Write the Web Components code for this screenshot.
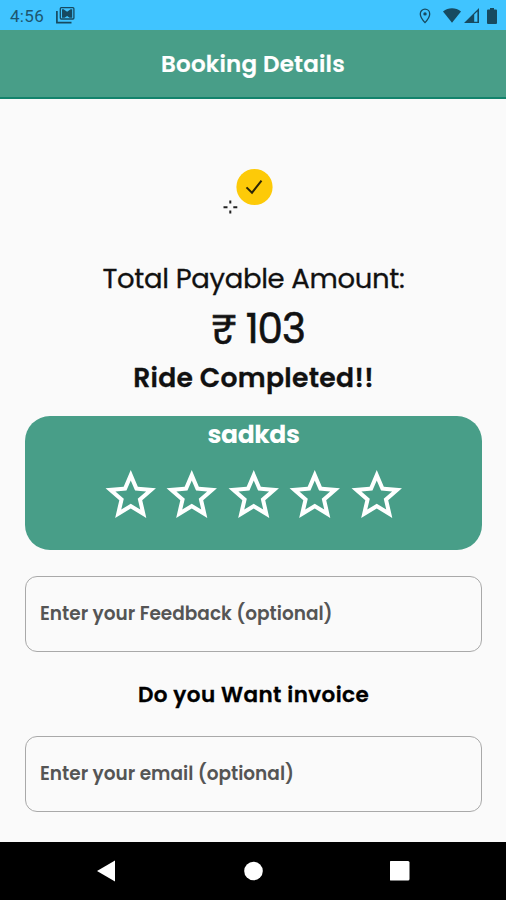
<!DOCTYPE html>
<html lang="en">
<head>
<meta charset="utf-8">
<meta name="viewport" content="width=device-width, initial-scale=1">
<title>Booking Details</title>
<style>
  body {
    margin: 0;
    font-family: Poppins, Inter, "Noto Sans", sans-serif;
    color: #111;
    background: #fafafa;
  }
</style>
</head>
<body>
<booking-screen>
  <status-bar slot="top" time="4:56"></status-bar>
  <app-header slot="top">Booking Details</app-header>

  <success-mark></success-mark>
  <text-row class="label">Total Payable Amount:</text-row>
  <text-row class="amount">₹ 103</text-row>
  <text-row class="state">Ride Completed!!</text-row>
  <rating-card>sadkds</rating-card>
  <outlined-field>Enter your Feedback (optional)</outlined-field>
  <text-row class="question">Do you Want invoice</text-row>
  <outlined-field>Enter your email (optional)</outlined-field>

  <nav-bar slot="bottom"></nav-bar>
</booking-screen>

<script>
// Attach an open shadow root filled with the given markup
function render(el, html) {
  const template = document.createElement('template');
  template.innerHTML = html;
  el.attachShadow({ mode: 'open' }).appendChild(template.content.cloneNode(true));
}

class BookingScreen extends HTMLElement {
  constructor() {
    super();
    render(this, `
      <style>
        :host {
          display: flex;
          flex-direction: column;
          height: 900px;
          overflow: hidden;
        }
        main {
          flex: 1;
          display: flex;
          flex-direction: column;
          padding: 0 24px 0 25px;
        }
        ::slotted(rating-card) { margin: 12px 0 26px; }
      </style>
      <slot name="top"></slot>
      <main><slot></slot></main>
      <slot name="bottom"></slot>
    `);
  }
}

class StatusBar extends HTMLElement {
  constructor() {
    super();
    render(this, `
      <style>
        :host {
          display: flex;
          align-items: center;
          box-sizing: border-box;
          height: 30px;
          padding: 1px 9px 0 10px;
          background: #40c4ff;
          color: #1d566f;
          font: 17px/30px Roboto, sans-serif;
        }
        .time { width: 46px; letter-spacing: 0.3px; }
        .space { flex: 1; }
        svg { display: block; fill: #174a60; }
        .mail { margin-bottom: 1px; }
        .pin { margin-right: 12px; }
        .wifi { margin-right: 3px; }
        .signal { margin-right: 8px; }
      </style>
      <span class="time"></span>
      <svg class="mail" width="19" height="17" viewBox="0 0 19 17">
        <path d="M.9 4v11.600h14.600" fill="none" stroke="#174a60" stroke-width="1.700"/>
        <rect x="4.300" y=".7" width="13.600" height="11.300" rx="1" fill="none" stroke="#174a60" stroke-width="1.300"/>
        <path d="M6 2.300h1.600l3.500 2.500 3.500-2.500h1.600v8.500h-2.600L11.100 9 8.600 10.800H6z"/>
      </svg>
      <span class="space"></span>
      <svg class="pin" width="12" height="16" viewBox="0 0 12 16">
        <path d="M6 1.200a4.700 4.700 0 0 0-4.700 4.700C1.300 9.300 6 14.600 6 14.600s4.700-5.300 4.700-8.700A4.700 4.700 0 0 0 6 1.200z" fill="none" stroke="#174a60" stroke-width="1.300"/>
        <circle cx="6" cy="5.900" r="1.700"/>
      </svg>
      <svg class="wifi" width="18" height="15" viewBox="0 0 18 15">
        <path d="M0 3.500C5.400-.7 12.600-.7 18 3.500L9 14.700z"/>
      </svg>
      <svg class="signal" width="15" height="15" viewBox="0 0 15 15">
        <path fill-rule="evenodd" d="M0 15 15 0v15zM10.200 6.600v7.200h3.200V3.400z"/>
      </svg>
      <svg width="10" height="16" viewBox="0 0 10 16">
        <path d="M3 0h4v1.600h2a1 1 0 0 1 1 1V15a1 1 0 0 1-1 1H1a1 1 0 0 1-1-1V2.600a1 1 0 0 1 1-1h2z"/>
      </svg>
    `);
  }

  connectedCallback() {
    this.shadowRoot.querySelector('.time').textContent = this.getAttribute('time');
  }
}

class AppHeader extends HTMLElement {
  constructor() {
    super();
    render(this, `
      <style>
        :host {
          display: flex;
          align-items: center;
          justify-content: center;
          box-sizing: border-box;
          height: 69px;
          padding-top: 1px;
          background: #489e88;
          border-bottom: 2px solid #12836c;
          color: #fff;
          font-size: 23px;
          font-weight: 600;
          letter-spacing: 0.2px;
          -webkit-text-stroke: 0.2px;
        }
      </style>
      <slot></slot>
    `);
  }
}

class SuccessMark extends HTMLElement {
  constructor() {
    super();
    render(this, `
      <style>
        :host { display: flex; justify-content: center; height: 155px; }
        svg { display: block; }
      </style>
      <svg width="101" height="155" viewBox="203 99 101 155">
        <circle cx="254.500" cy="187" r="18.100" fill="#fdca08"/>
        <path d="M246.500 187.400l5.500 5.300 9.500-12" fill="none" stroke="#2b2507" stroke-width="2"/>
        <path d="M230.300 200.500v3M230.300 210.500v3M223.500 207.200h4M233.300 207.200h4" stroke="#222" stroke-width="2"/>
      </svg>
    `);
  }
}

class TextRow extends HTMLElement {
  constructor() {
    super();
    render(this, `
      <style>
        :host {
          display: flex;
          align-items: center;
          justify-content: center;
          white-space: nowrap;
          -webkit-text-stroke: 0.3px;
        }
        :host(.label) { height: 50px; font-size: 27.5px; letter-spacing: -0.33px; }
        :host(.amount) {
          box-sizing: border-box;
          height: 48px;
          padding: 1px 0 0 9px;
          font-size: 40.5px;
          letter-spacing: -1px;
          -webkit-text-stroke: 0.6px;
        }
        :host(.state) { height: 52px; font-size: 26.6px; font-weight: 600; letter-spacing: 0.3px; }
        :host(.question) { height: 84px; font-size: 21.5px; font-weight: 600; letter-spacing: 0.4px; color: #000; }
      </style>
      <slot></slot>
    `);
  }
}

class RatingCard extends HTMLElement {
  constructor() {
    super();
    render(this, `
      <style>
        :host {
          display: block;
          height: 134px;
          border-radius: 25px;
          background: #489e88;
          color: #fff;
        }
        .name {
          height: 49px;
          line-height: 38px;
          text-align: center;
          font-size: 25px;
          font-weight: 700;
          letter-spacing: -0.35px;
        }
        .stars { display: flex; justify-content: center; }
        svg { display: block; width: 61.5px; height: 60.5px; fill: #fff; }
      </style>
      <div class="name"><slot></slot></div>
      <div class="stars"></div>
    `);
    const star = `
      <svg viewBox="0 0 24 24"><path d="M22 9.240l-7.190-.62L12 2 9.190 8.630 2 9.240l5.460 4.730L5.820 21 12 17.270 18.180 21l-1.630-7.030L22 9.240zM12 15.400l-3.760 2.270 1-4.280-3.320-2.880 4.380-.38L12 6.100l1.710 4.040 4.380.38-3.320 2.880 1 4.280L12 15.400z"/></svg>`;
    this.shadowRoot.querySelector('.stars').innerHTML = star.repeat(5);
  }
}

class OutlinedField extends HTMLElement {
  constructor() {
    super();
    render(this, `
      <style>
        :host {
          display: flex;
          align-items: center;
          box-sizing: border-box;
          height: 76px;
          padding: 0 0 1px 14px;
          border: 1px solid #a9a9a9;
          border-radius: 12px;
          color: #555;
          font-size: 18.5px;
          font-weight: 600;
        }
      </style>
      <slot></slot>
    `);
  }
}

class NavBar extends HTMLElement {
  constructor() {
    super();
    render(this, `
      <style>
        :host {
          display: flex;
          align-items: center;
          justify-content: space-between;
          box-sizing: border-box;
          height: 58px;
          padding: 0 96px;
          background: #000;
        }
        svg { display: block; fill: #fff; }
      </style>
      <svg width="20" height="22" viewBox="0 0 20 22"><path d="M1 11 19 .5v21z"/></svg>
      <svg width="20" height="20" viewBox="0 0 20 20"><circle cx="10.500" cy="10" r="9.300"/></svg>
      <svg width="20" height="20" viewBox="0 0 20 20"><rect x="-.5" width="20" height="19.500" rx="1.500"/></svg>
    `);
  }
}

customElements.define('booking-screen', BookingScreen);
customElements.define('status-bar', StatusBar);
customElements.define('app-header', AppHeader);
customElements.define('success-mark', SuccessMark);
customElements.define('text-row', TextRow);
customElements.define('rating-card', RatingCard);
customElements.define('outlined-field', OutlinedField);
customElements.define('nav-bar', NavBar);
</script>
</body>
</html>
